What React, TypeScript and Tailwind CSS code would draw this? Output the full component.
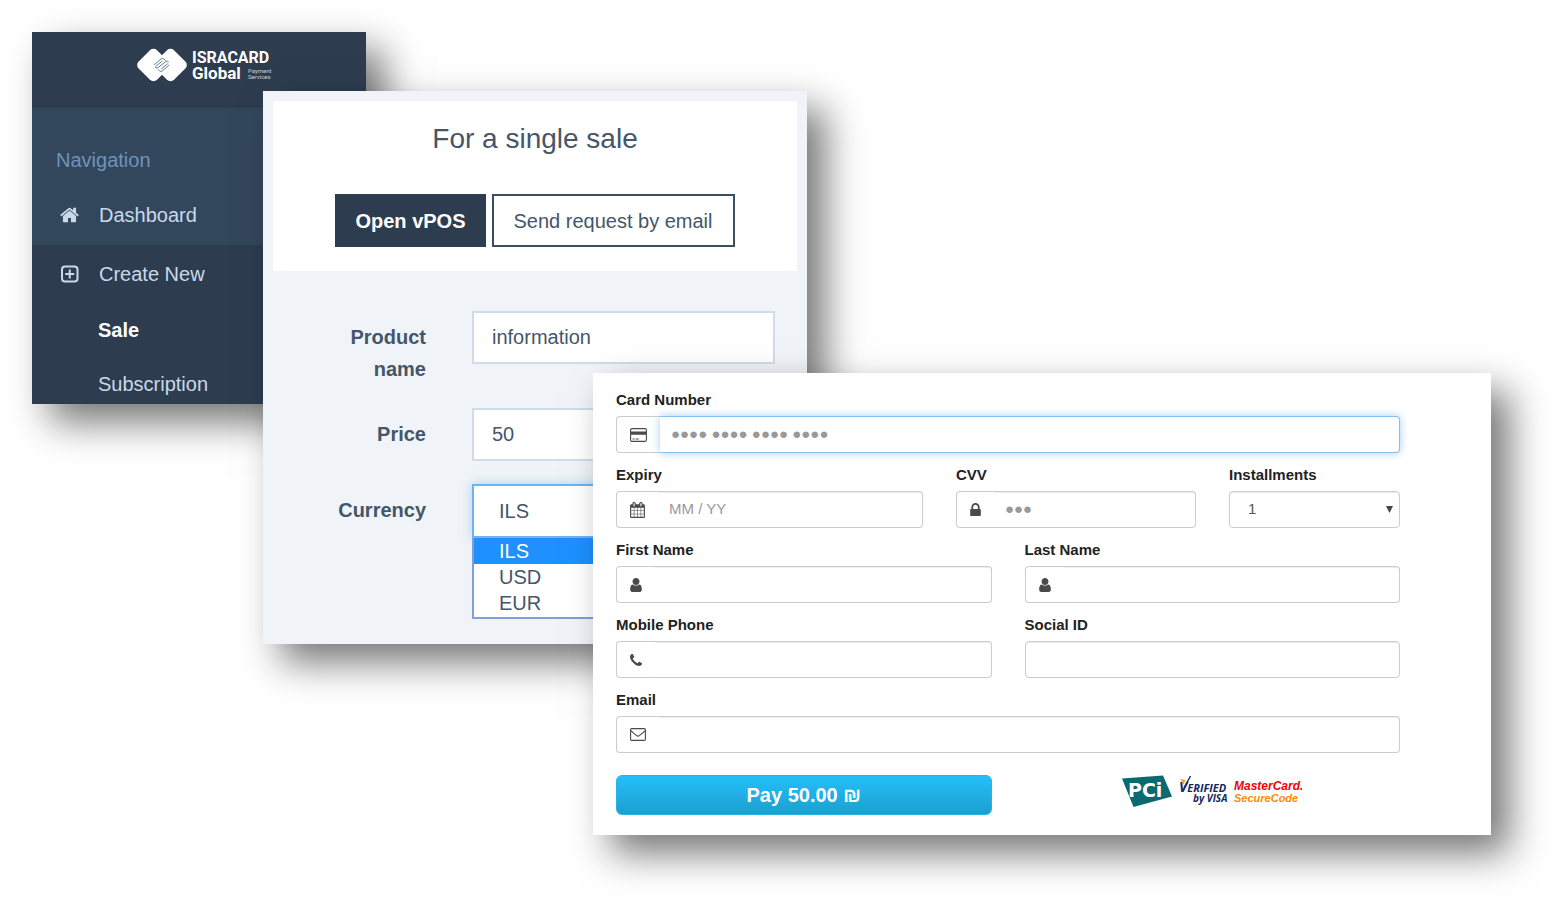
import { useState, type ReactNode } from "react";
import { clsx } from "clsx";

const panelShadow = "shadow-[18px_18px_36px_rgba(0,0,0,0.54)]";

/* ---------- icons ---------- */

function HomeIcon() {
  return (
    <svg viewBox="64 256 1664 1280" className="h-4 w-[19px]" fill="currentColor" aria-hidden>
      <path d="M1472 992v480q0 26-19 45t-45 19h-384v-384h-256v384h-384q-26 0-45-19t-19-45v-480q0-1 .5-3t.5-3l575-474 575 474q1 2 1 6zm223-69l-62 74q-8 9-21 11h-3q-13 0-21-7l-692-577-692 577q-12 8-24 7-13-2-21-11l-62-74q-8-10-7-23.5t11-21.5l719-599q32-26 76-26t76 26l244 204v-195q0-14 9-23t23-9h192q14 0 23 9t9 23v408l219 182q10 8 11 21.5t-7 23.5z" />
    </svg>
  );
}

function PlusSquareIcon() {
  return (
    <svg viewBox="0 0 19 18" className="h-[18px] w-[19px]" fill="none" stroke="currentColor" strokeWidth="2" aria-hidden>
      <rect x="2" y="1.5" width="15.5" height="15" rx="3" />
      <path d="M9.75 4.5v9M5.2 9h9" />
    </svg>
  );
}

function CardIcon() {
  return (
    <svg viewBox="0 0 17 14" className="h-[14px] w-[17px]" aria-hidden>
      <rect x="0.6" y="0.6" width="15.8" height="12.8" rx="1.4" fill="none" stroke="currentColor" strokeWidth="1.1" />
      <path d="M1 3.6h15v3.2H1zM2.6 10.4h2v1h-2zM5.6 10.4h3.2v1H5.6z" fill="currentColor" />
    </svg>
  );
}

function CalendarIcon() {
  return (
    <svg viewBox="64 0 1664 1792" className="h-4 w-[15px]" fill="currentColor" aria-hidden>
      <path d="M192 1664h288v-288h-288v288zm352 0h320v-288h-320v288zm-352-352h288v-320h-288v320zm352 0h320v-320h-320v320zm-352-384h288v-288h-288v288zm736 736h320v-288h-320v288zm-384-736h320v-288h-320v288zm768 736h288v-288h-288v288zm-384-352h320v-320h-320v320zm-352-864v-288q0-13-9.5-22.5t-22.5-9.5h-64q-13 0-22.5 9.5t-9.5 22.5v288q0 13 9.5 22.5t22.5 9.5h64q13 0 22.5-9.5t9.5-22.5zm736 864h288v-320h-288v320zm-384-384h320v-288h-320v288zm384 0h288v-288h-288v288zm32-480v-288q0-13-9.5-22.5t-22.5-9.5h-64q-13 0-22.5 9.5t-9.5 22.5v288q0 13 9.5 22.5t22.5 9.5h64q13 0 22.5-9.5t9.5-22.5zm384-64v1280q0 52-38 90t-90 38h-1408q-52 0-90-38t-38-90v-1280q0-52 38-90t90-38h128v-96q0-66 47-113t113-47h64q66 0 113 47t47 113v96h384v-96q0-66 47-113t113-47h64q66 0 113 47t47 113v96h128q52 0 90 38t38 90z" />
    </svg>
  );
}

function LockIcon() {
  return (
    <svg viewBox="320 128 1152 1408" className="h-[13px] w-[11px]" fill="currentColor" aria-hidden>
      <path d="M640 768h512v-192q0-106-75-181t-181-75-181 75-75 181v192zm832 96v576q0 40-28 68t-68 28h-960q-40 0-68-28t-28-68v-576q0-40 28-68t68-28h32v-192q0-184 132-316t316-132 316 132 132 316v192h32q40 0 68 28t28 68z" />
    </svg>
  );
}

function UserIcon() {
  return (
    <svg viewBox="256 128 1280 1536" className="h-[14px] w-3" fill="currentColor" aria-hidden>
      <path d="M1536 1399q0 109-62.5 187t-150.5 78h-854q-88 0-150.5-78t-62.5-187q0-85 8.5-160.5t31.5-152 58.5-131 94-89 134.5-34.5q131 128 313 128t313-128q76 0 134.5 34.5t94 89 58.5 131 31.5 152 8.5 160.5zm-256-887q0 159-112.5 271.5t-271.5 112.5-271.5-112.5-112.5-271.5 112.5-271.5 271.5-112.5 271.5 112.5 112.5 271.5z" />
    </svg>
  );
}

function PhoneIcon() {
  return (
    <svg viewBox="192 128 1408 1408" className="size-3" fill="currentColor" aria-hidden>
      <path d="M1600 1240q0 27-10 70.5t-21 68.5q-21 50-122 106-94 51-186 51-27 0-53-3.5t-57.5-12.5-47-14.5-55.5-20.5-49-18q-98-35-175-83-127-79-264-216t-216-264q-48-77-83-175-3-9-18-49t-20.5-55.5-14.5-47-12.5-57.5-3.5-53q0-92 51-186 56-101 106-122 25-11 68.5-21t70.5-10q14 0 21 3 18 6 53 76 11 19 30 54t35 63.5 31 53.5q3 4 17.5 25t21.5 35.5 7 28.5q0 20-28.5 50t-62 55-62 53-28.5 46q0 9 5 22.5t8.5 20.5 14 24 11.5 19q76 137 174 235t235 174q2 1 19 11.5t24 14 20.5 8.5 22.5 5q18 0 46-28.5t53-62 55-62 50-28.5q14 0 28.5 7t35.5 21.5 25 17.5q25 15 53.5 31t63.5 35 54 30q70 35 76 53 3 7 3 21z" />
    </svg>
  );
}

function EnvelopeIcon() {
  return (
    <svg viewBox="0 0 16 13" className="h-[13px] w-4" fill="none" stroke="currentColor" strokeWidth="1.1" aria-hidden>
      <rect x="0.6" y="0.6" width="14.8" height="11.8" rx="1.2" />
      <path d="M0.8 2.6c2 1.9 4 3.4 5.6 4.8.9.8 2.3.8 3.2 0 1.6-1.4 3.6-2.9 5.6-4.8" />
    </svg>
  );
}

/* ---------- logos ---------- */

function IsracardLogo() {
  return (
    <svg viewBox="0 0 136 34" className="h-[34px] w-[136px]" role="img" aria-label="Isracard Global">
      <g fill="#fff">
        <rect x="3.5" y="4" width="26" height="26" rx="5" transform="rotate(45 16.5 17)" />
        <rect x="20.5" y="4" width="26" height="26" rx="5" transform="rotate(45 33.5 17)" />
      </g>
      <g fill="none" stroke="#6b7a8b" strokeWidth="1" strokeLinecap="round" strokeLinejoin="round">
        <path d="M17.5 16.5l6.5-5.5q1.6-1.2 3 0l1.4 1.3M19 18.2l6-5" />
        <path d="M18.5 19.5q1.4 1 2.8 0l7.4-6q1.6-1 2.8.4" />
        <path d="M32 17.2l-6.5 5.6q-1.6 1.3-3 0l-1.3-1.3M30.6 15.8l-6 5" />
      </g>
      <g fill="#fff" fontFamily="Roboto, sans-serif">
        <text fontWeight="700">
          <tspan x="55" y="15" fontSize="16">ISRACARD</tspan>
          <tspan x="55" y="31" fontSize="17">Global</tspan>
        </text>
        <text fontSize="6" fillOpacity="0.75">
          <tspan x="111" y="25">Payment</tspan>
          <tspan x="111" y="31">Services</tspan>
        </text>
      </g>
    </svg>
  );
}

function SecurityLogos() {
  return (
    <svg viewBox="0 0 180 32" className="h-8 w-[180px]" role="img" aria-label="PCI, Verified by Visa, MasterCard SecureCode">
      <path d="M0 3.5L41 .5l9 21L11.500 32z" fill="#0a6a70" />
      <text x="6" y="22" fontFamily="DejaVu Sans, sans-serif" fontWeight="700" fontSize="19" fill="#fff">PCi</text>
      <text fill="#16295c" fontFamily="Open Sans, sans-serif" fontWeight="700" fontStyle="italic">
        <tspan x="57" y="17" fontSize="14">V</tspan>
        <tspan fontSize="11">ERIFIED</tspan>
        <tspan x="71" y="27" fontSize="10">by VISA</tspan>
      </text>
      <path d="M58.500 4l5 1-2 4.500z" fill="#f9a11b" />
      <path d="M62 13L68.500 1" stroke="#16295c" strokeWidth="1.4" />
      <text fontFamily="Liberation Sans, sans-serif" fontWeight="700" fontStyle="italic">
        <tspan x="112" y="15" fontSize="12" fill="#f5000c">MasterCard.</tspan>
        <tspan x="112" y="27" fontSize="11" fill="#ff8a00">SecureCode</tspan>
      </text>
    </svg>
  );
}

/* ---------- navigation ---------- */

function NavigationPanel() {
  return (
    <aside className={clsx("col-start-1 col-end-3 row-start-1 min-w-0 bg-[#2d3d4f] text-xl leading-6 text-[#c9d9ea]", panelShadow)}>
      <header className="flex justify-center pt-4 pb-6 pl-3">
        <IsracardLogo />
      </header>
      <nav>
        <div className="bg-[#33475c] pt-[42px] shadow-[inset_0_3px_3px_-2px_rgba(0,0,0,0.3)]">
          <h2 className="px-6 text-[#6f93bb]">Navigation</h2>
          <a href="#dashboard" className="mt-3 flex h-[61px] items-center gap-5 px-7">
            <HomeIcon />
            Dashboard
          </a>
        </div>
        <a href="#create" className="flex h-[58px] items-center gap-5 px-7">
          <PlusSquareIcon />
          Create New
        </a>
        <ul className="flex flex-col gap-7 pt-[14px] pb-[7px] pl-[66px] leading-[26px]">
          <li><a href="#sale" className="font-bold text-white">Sale</a></li>
          <li><a href="#subscription">Subscription</a></li>
        </ul>
      </nav>
    </aside>
  );
}

/* ---------- sale form ---------- */

const currencies = ["ILS", "USD", "EUR"];
const saleLabel = "pt-[10px] text-right leading-8 font-bold";
const saleInput = "h-[53px] w-full border-2 border-[#d0dce8] bg-white px-[18px] outline-none";

function SalePanel() {
  const [currency, setCurrency] = useState("ILS");

  return (
    <section className={clsx("col-start-2 col-end-5 row-start-1 mt-[59px] min-w-0 bg-[#f0f4f8] p-[10px] pb-[25px] text-xl text-[#45566a]", panelShadow)}>
      <div className="bg-white pt-[18px] pb-6">
        <h1 className="text-center text-[28px] leading-10">For a single sale</h1>
        <div className="mt-[35px] flex justify-center gap-[6px]">
          <button type="button" className="h-[53px] bg-[#2d3d4f] px-5 font-bold text-white">Open vPOS</button>
          <button type="button" className="h-[53px] border-2 border-[#3a4d62] bg-white px-5">Send request by email</button>
        </div>
      </div>

      <form className="mt-10 grid grid-cols-[95fr_303fr] gap-x-[46px] gap-y-[23px] pr-[22px] pl-[58px]">
        <label htmlFor="product" className={saleLabel}>Product name</label>
        <input id="product" defaultValue="information" className={saleInput} />

        <label htmlFor="price" className={saleLabel}>Price</label>
        <input id="price" defaultValue="50" className={saleInput} />

        <label htmlFor="currency" className={saleLabel}>Currency</label>
        <div>
          <select
            id="currency"
            value={currency}
            onChange={(e) => setCurrency(e.target.value)}
            className="block h-[54px] w-full appearance-none border-2 border-[#6db3ee] bg-white px-[25px] shadow-[0_0_10px_rgba(102,175,233,0.5)] outline-none"
          >
            {currencies.map((item) => (
              <option key={item}>{item}</option>
            ))}
          </select>
          <ul role="listbox" aria-label="Currency" className="border-2 border-t-0 border-[#7f9fdc] bg-white pb-px leading-[26px]">
            {currencies.map((item) => (
              <li
                key={item}
                role="option"
                aria-selected={item === currency}
                onClick={() => setCurrency(item)}
                className={clsx("cursor-default px-[25px]", item === currency && "bg-[#1e90ff] text-white")}
              >
                {item}
              </li>
            ))}
          </ul>
        </div>
      </form>
    </section>
  );
}

/* ---------- card form ---------- */

type FieldProps = {
  id: string;
  label: string;
  icon?: ReactNode;
  placeholder?: string;
  active?: boolean;
};

function Field({ id, label, icon, placeholder, active }: FieldProps) {
  return (
    <div className="min-w-0">
      <label htmlFor={id} className="mb-[6px] block leading-5 font-bold text-[#222]">{label}</label>
      <div className="flex h-[37px]">
        {icon && (
          <span className="flex shrink-0 items-center rounded-l border border-r-0 border-[#ccc] px-[13px] text-[#4a4a4a]">
            {icon}
          </span>
        )}
        <input
          id={id}
          placeholder={placeholder}
          className={clsx(
            "w-full min-w-0 border bg-white px-[11px] outline-none placeholder:text-[#999]",
            icon ? "rounded-r border-l-0" : "rounded",
            active
              ? "border-[#85bfee] shadow-[0_0_8px_rgba(102,175,233,0.6)]"
              : "border-[#ccc] shadow-[inset_0_1px_1px_rgba(0,0,0,0.075)]",
          )}
        />
      </div>
    </div>
  );
}

function CardPanel() {
  return (
    <form className={clsx("col-start-4 col-end-6 row-start-1 mt-[341px] flex min-w-0 flex-col gap-3 bg-white pt-[17px] pr-[91px] pb-5 pl-[23px] text-[15px] text-[#555]", panelShadow)}>
      <Field id="card" label="Card Number" icon={<CardIcon />} placeholder="●●●● ●●●● ●●●● ●●●●" active />

      <div className="grid grid-cols-[307fr_240fr_171fr] gap-x-[33px]">
        <Field id="expiry" label="Expiry" icon={<CalendarIcon />} placeholder="MM / YY" />
        <Field id="cvv" label="CVV" icon={<LockIcon />} placeholder="●●●" />
        <div className="min-w-0">
          <label htmlFor="installments" className="mb-[6px] block leading-5 font-bold text-[#222]">Installments</label>
          <div className="relative">
            <select
              id="installments"
              className="block h-[37px] w-full appearance-none rounded border border-[#ccc] bg-white px-[18px] shadow-[inset_0_1px_1px_rgba(0,0,0,0.075)] outline-none"
            >
              <option>1</option>
              <option>2</option>
              <option>3</option>
            </select>
            <svg viewBox="0 0 7 7" className="pointer-events-none absolute top-[15px] right-[7px] size-[7px]" aria-hidden>
              <path d="M0 0h7L3.5 7z" fill="#444" />
            </svg>
          </div>
        </div>
      </div>

      <div className="grid grid-cols-2 gap-x-[33px] gap-y-3">
        <Field id="first-name" label="First Name" icon={<UserIcon />} />
        <Field id="last-name" label="Last Name" icon={<UserIcon />} />
        <Field id="phone" label="Mobile Phone" icon={<PhoneIcon />} />
        <Field id="social-id" label="Social ID" />
      </div>

      <Field id="email" label="Email" icon={<EnvelopeIcon />} />

      <div className="mt-[10px] grid grid-cols-2 gap-x-[33px]">
        <button
          type="button"
          className="h-10 rounded-md border border-[#25b4ea] bg-linear-to-b from-[#25bffa] to-[#1c9fd0] text-xl leading-5 font-bold text-white"
        >
          Pay 50.00 ₪
        </button>
        <div className="flex justify-center">
          <SecurityLogos />
        </div>
      </div>
    </form>
  );
}

export default function App() {
  return (
    <main className="min-h-screen overflow-hidden bg-white font-['Liberation_Sans',Arial,sans-serif]">
      {/* the three screens overlap, each one starting further right and lower */}
      <div className="grid grid-cols-[231fr_103fr_227fr_214fr_684fr] items-start pt-8 pr-[65px] pb-16 pl-8">
        <NavigationPanel />
        <SalePanel />
        <CardPanel />
      </div>
    </main>
  );
}
